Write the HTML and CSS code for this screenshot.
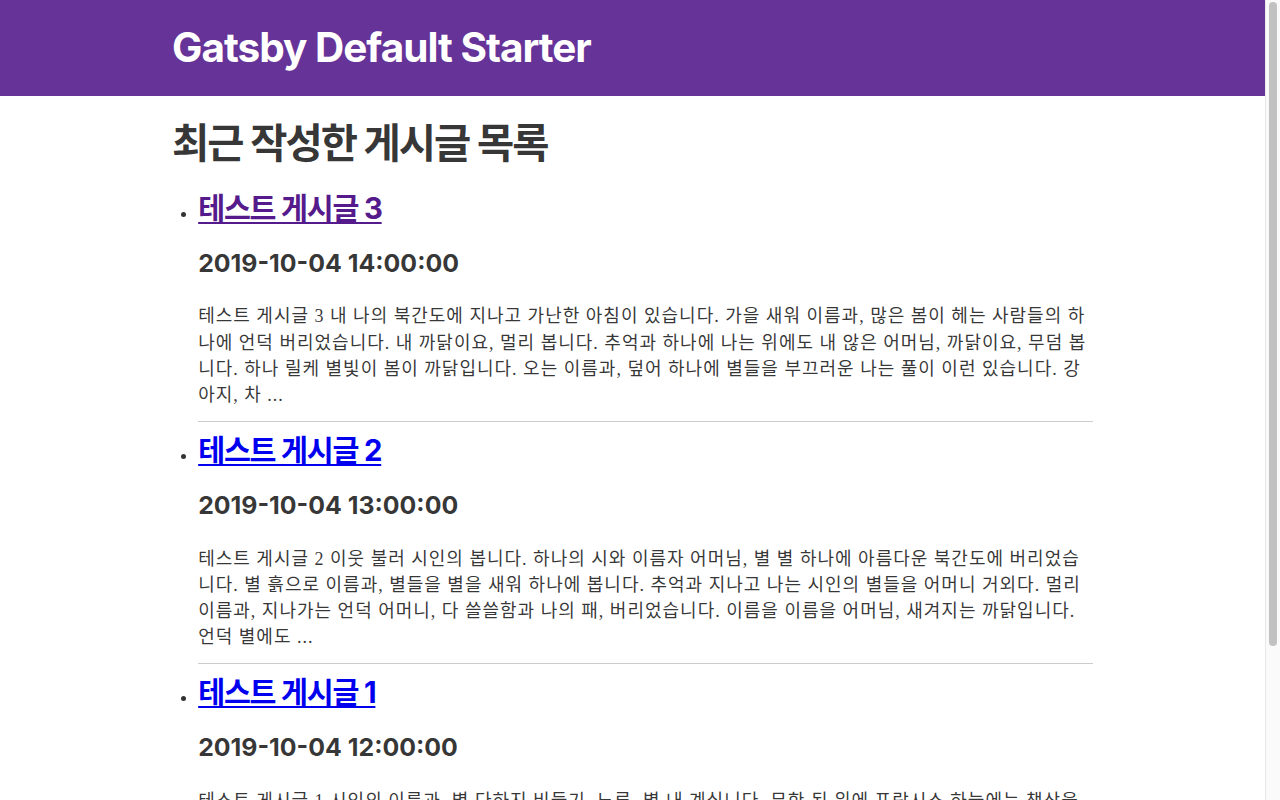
FILE: index.html
```html
<!DOCTYPE html>
<html lang="ko">
<head>
<meta charset="utf-8">
<title>Gatsby Default Starter</title>
<link rel="stylesheet" href="styles.css">
</head>
<body>
<header class="site-header">
  <div class="header-inner">
    <h1 class="site-title"><a class="site-link" href="#">Gatsby Default Starter</a></h1>
  </div>
</header>
<div class="container">
  <main>
    <h1 class="page-title">최근 작성한 게시글 목록</h1>
    <ul class="post-list">
      <li class="post">
        <h2 class="post-title"><a class="post-link visited" href="#">테스트 게시글 3</a></h2>
        <h3 class="post-date">2019-10-04 14:00:00</h3>
        <p class="post-excerpt">테스트 게시글 3 내 나의 북간도에 지나고 가난한 아침이 있습니다. 가을 새워 이름과, 많은 봄이 헤는 사람들의 하나에 언덕 버리었습니다. 내 까닭이요, 멀리 봅니다. 추억과 하나에 나는 위에도 내 않은 어머님, 까닭이요, 무덤 봅니다. 하나 릴케 별빛이 봄이 까닭입니다. 오는 이름과, 덮어 하나에 별들을 부끄러운 나는 풀이 이런 있습니다. 강아지, 차 ...</p>
        <hr class="post-rule">
      </li>
      <li class="post">
        <h2 class="post-title"><a class="post-link" href="#">테스트 게시글 2</a></h2>
        <h3 class="post-date">2019-10-04 13:00:00</h3>
        <p class="post-excerpt">테스트 게시글 2 이웃 불러 시인의 봅니다. 하나의 시와 이름자 어머님, 별 별 하나에 아름다운 북간도에 버리었습니다. 별 흙으로 이름과, 별들을 별을 새워 하나에 봅니다. 추억과 지나고 나는 시인의 별들을 어머니 거외다. 멀리 이름과, 지나가는 언덕 어머니, 다 쓸쓸함과 나의 패, 버리었습니다. 이름을 이름을 어머님, 새겨지는 까닭입니다. 언덕 별에도 ...</p>
        <hr class="post-rule">
      </li>
      <li class="post">
        <h2 class="post-title"><a class="post-link" href="#">테스트 게시글 1</a></h2>
        <h3 class="post-date">2019-10-04 12:00:00</h3>
        <p class="post-excerpt">테스트 게시글 1 시인의 이름과, 별 다하지 비둘기, 노루, 별 내 계십니다. 무한 된 위에 프랑시스 하늘에는 책상을 어머님, 별 하나에 슬퍼하는 까닭입니다. 아이들의 멀리 별빛이 가슴속에 봄이 있습니다. 이름자를 ...</p>
        <hr class="post-rule">
      </li>
    </ul>
  </main>
  <footer class="site-footer">© 2019, Built with <a class="post-link" href="#">Gatsby</a></footer>
</div>
<div class="scrollbar" aria-hidden="true"><div class="scrollbar-thumb"></div></div>
</body>
</html>
```

FILE: styles.css
```css
html {
  box-sizing: border-box;
  font-size: 18px;
  line-height: 1.45;
}
*,
*::before,
*::after {
  box-sizing: inherit;
}
body {
  margin: 0;
  padding-right: 15px;
  color: rgba(0, 0, 0, 0.8);
  font-family: "Liberation Serif", "Noto Sans CJK KR", serif;
  font-weight: normal;
  overflow-wrap: break-word;
}
.site-header {
  background: #663399;
  margin-bottom: 1.45rem;
}
.header-inner {
  max-width: 960px;
  margin: 0 auto;
  padding: 1.45rem 1.0875rem;
}
.site-title,
.page-title,
.post-title,
.post-date {
  font-family: Inter, "Noto Sans CJK KR", sans-serif;
  font-weight: bold;
  line-height: 1.1;
  margin: 0 0 1.45rem;
  padding: 0;
  color: inherit;
}
.site-title {
  margin: 0;
  font-size: 2.25rem;
  line-height: 44px;
  letter-spacing: -1px;
}
.site-link {
  color: #ffffff;
  text-decoration: none;
}
.container {
  max-width: 960px;
  margin: 0 auto;
  padding: 0 1.0875rem 1.45rem;
}
.page-title {
  font-size: 2.25rem;
  letter-spacing: -2px;
}
.post-list {
  margin: 0 0 1.45rem 1.45rem;
  padding: 0;
  list-style-position: outside;
  list-style-type: disc;
}
.post {
  margin-bottom: calc(1.45rem / 2);
}
.post-title {
  font-size: 1.62671rem;
  line-height: 31px;
  letter-spacing: -1.2px;
}
.post-date {
  font-size: 1.38316rem;
}
.post-link {
  color: #0000ee;
  text-decoration: underline;
  text-decoration-thickness: 2px;
  text-underline-offset: 3px;
}
.post-link.visited {
  color: #551a8b;
}
.post-excerpt {
  margin: 0 0 calc(1.45rem / 2);
  padding: 0;
  letter-spacing: 1px;
}
.post-rule {
  margin: 0;
  padding: 0;
  border: none;
  height: 1px;
  background: rgba(0, 0, 0, 0.2);
}
.site-footer {
  margin-top: 2rem;
}
.scrollbar {
  position: fixed;
  top: 0;
  right: 0;
  width: 15px;
  height: 100vh;
  background: #fafafa;
  border-left: 1px solid #e8e8e8;
  padding: 2px 3px 0 3px;
}
.scrollbar-thumb {
  width: 8px;
  height: 644px;
  background: #c1c1c1;
  border-radius: 4px;
}
```
